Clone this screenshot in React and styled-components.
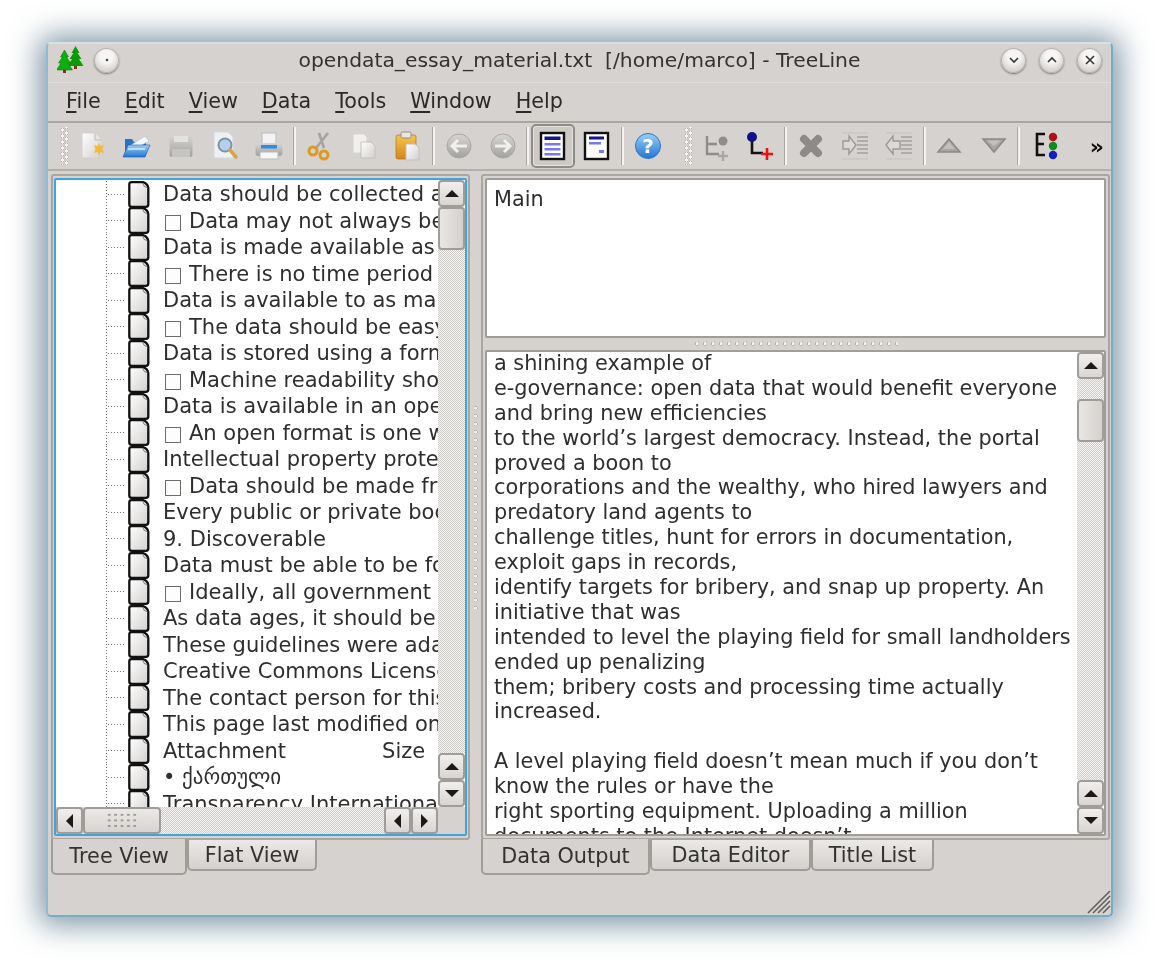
import React from 'react';
import styled, { createGlobalStyle } from 'styled-components';

const GlobalStyle = createGlobalStyle`
  html, body {
    margin: 0;
    padding: 0;
    background: #fff;
    height: 964px;
    overflow: hidden;
  }
  body {
    font-family: "DejaVu Sans", sans-serif;
    color: #2b2a29;
  }
`;

const Stage = styled.div`
  width: 1159px;
  height: 964px;
  padding: 42px 46px 47px 46px;
  box-sizing: border-box;
`;

const Win = styled.div`
  height: 100%;
  display: flex;
  flex-direction: column;
  box-sizing: border-box;
  background: #d6d2cf;
  border-radius: 5px;
  border: 2px solid #76abca;
  border-top-color: #d4e2ea;
  border-left-color: #8fbad2;
  box-shadow: 0 1px 30px 7px rgba(50, 85, 110, 0.62);
  filter: blur(0.45px);
`;

const TitleBar = styled.div`
  height: 39px;
  flex: none;
  box-sizing: border-box;
  display: grid;
  grid-template-columns: 1fr auto 1fr;
  align-items: center;
  padding: 0 9px 6px 9px;
  border-bottom: 1px solid #dfdcd9;
`;

const TitleSide = styled.div`
  display: flex;
  align-items: center;
  justify-content: ${({ $end }) => ($end ? 'flex-end' : 'flex-start')};
  gap: ${({ $end }) => ($end ? '13px' : '10px')};
`;

const TitleText = styled.div`
  font-size: 20.3px;
  white-space: pre;
  color: #33322f;
`;

const RoundBtn = styled.div`
  width: 25px;
  height: 25px;
  border-radius: 50%;
  display: flex;
  align-items: center;
  justify-content: center;
  background: radial-gradient(circle at 50% 35%, #f6f5f4 30%, #c9c6c3 85%);
  box-shadow: 0 1px 2px rgba(0, 0, 0, 0.45), inset 0 0 0 1px #b5b2af;
`;

const MenuBar = styled.div`
  height: 38px;
  flex: none;
  display: flex;
  align-items: center;
  padding: 0 0 2px 6px;
  box-sizing: border-box;
  margin-bottom: 2px;
  box-shadow: 0 2px 0 #aaa6a2;
  font-size: 20.7px;
`;

const MenuItem = styled.div`
  padding: 0 12px;
  & u {
    text-underline-offset: 3px;
    text-decoration-thickness: 2px;
  }
`;

const ToolBar = styled.div`
  height: 48px;
  flex: none;
  display: flex;
  align-items: center;
  padding-left: 12px;
  border-bottom: 2px solid #b3afab;
  box-sizing: border-box;
`;

const Handle = styled.div`
  width: 10px;
  height: 38px;
  flex: none;
  margin-left: ${({ $gap }) => $gap || 0}px;
  background:
    radial-gradient(circle, #f6f5f4 1.5px, #adaaa6 1.7px, transparent 2.2px) 0 0 / 5px 6px repeat-y,
    radial-gradient(circle, #f6f5f4 1.5px, #adaaa6 1.7px, transparent 2.2px) 4px 3px / 5px 6px repeat-y;
`;

const ToolBtn = styled.div`
  width: 44.3px;
  height: 44px;
  flex: none;
  display: flex;
  align-items: center;
  justify-content: center;
  box-sizing: border-box;
  border-radius: 5px;
  ${({ $active }) =>
    $active
      ? `border: 2px solid #8f8c88; background: #cdcac6; box-shadow: inset 0 0 0 1px #e4e1de;`
      : ''}
`;

const ToolSep = styled.div`
  width: 6px;
  height: 38px;
  flex: none;
  display: flex;
  justify-content: center;
  &::before {
    content: '';
    width: 1px;
    background: #a8a5a1;
    border-right: 2px solid #f4f3f2;
  }
`;

const More = styled.div`
  margin-left: auto;
  padding-right: 7px;
  font-size: 22px;
  font-weight: bold;
  color: #111;
`;

const Body = styled.div`
  flex: 1;
  min-height: 0;
  display: flex;
  padding: 3px 1px 0 3px;
`;

const Column = styled.div`
  width: ${({ $w }) => $w}px;
  flex: none;
  display: flex;
  flex-direction: column;
`;

const VSplit = styled.div`
  width: 11px;
  flex: none;
  display: flex;
  align-items: center;
  justify-content: center;
  height: 666px;
`;

const SplitDots = styled.div`
  width: ${({ $horizontal }) => ($horizontal ? '204px' : '4px')};
  height: ${({ $horizontal }) => ($horizontal ? '4px' : '204px')};
  background: radial-gradient(circle at 40% 40%, #f2f1ef 1.2px, #a5a29e 1.8px, transparent 2.2px) 0 0 /
    ${({ $horizontal }) => ($horizontal ? '8px 4px' : '4px 8px')};
`;

const Frame = styled.div`
  height: 666px;
  flex: none;
  box-sizing: border-box;
  border: 2px solid #a9a5a1;
  border-radius: 3px;
  padding: ${({ $tight }) => ($tight ? '2px 1px' : '2px')};
  display: flex;
  flex-direction: column;
`;

const TreeFocus = styled.div`
  flex: 1;
  min-height: 0;
  display: flex;
  flex-direction: column;
  border: 2px solid #45a3dc;
  border-radius: 2px;
  background: #fff;
`;

const TreeMain = styled.div`
  flex: 1;
  min-height: 0;
  display: flex;
`;

const TreeList = styled.div`
  flex: 1;
  min-width: 0;
  overflow: hidden;
  background: #fff;
  padding-top: 1px;
`;

const Row = styled.div`
  height: 26.5px;
  display: flex;
  align-items: center;
  padding-left: 50px;
  font-size: 21px;
  white-space: nowrap;
  color: #2f2e2d;
`;

const Branch = styled.div`
  width: 22px;
  height: 100%;
  flex: none;
  background:
    repeating-linear-gradient(to bottom, #77746f 0 1px, transparent 1px 3px) 0 0 / 1px 100% no-repeat,
    repeating-linear-gradient(to right, #77746f 0 1px, transparent 1px 3px) 2px 50% / 16px 1px no-repeat;
`;

const RowText = styled.span`
  margin-left: 13px;
`;

const Check = styled.span`
  display: inline-block;
  width: 14px;
  height: 14px;
  margin: 0 8px 0 2px;
  border: 1px solid #6f6c68;
  vertical-align: -3px;
  background: #fdfdfd;
`;

const SizeCol = styled.span`
  margin-left: 96px;
`;

const VBar = styled.div`
  width: 27px;
  flex: none;
  display: flex;
  flex-direction: column;
  background: #fff;
`;

const HBar = styled.div`
  height: 27px;
  flex: none;
  display: flex;
  background: #d6d2cf;
`;

const Track = styled.div`
  flex: 1;
  min-width: 0;
  min-height: 0;
  display: flex;
  flex-direction: ${({ $horizontal }) => ($horizontal ? 'row' : 'column')};
  padding-top: ${({ $before }) => $before || 0}px;
  background: repeating-conic-gradient(#d0cecb 0 25%, #f3f2f0 0 50%) 0 0 / 2px 2px;
`;

const ScrollBtn = styled.div`
  width: 27px;
  height: 27px;
  flex: none;
  box-sizing: border-box;
  display: flex;
  align-items: center;
  justify-content: center;
  border: 2px solid #a09d99;
  border-radius: 4px;
  background: linear-gradient(#f1efed, #d8d5d2);
`;

const Arrow = styled.div`
  width: 0;
  height: 0;
  border-style: solid;
  border-color: transparent;
  ${({ $dir }) =>
    ({
      up: 'border-width: 0 7px 7px 7px; border-bottom-color: #1b1a19;',
      down: 'border-width: 7px 7px 0 7px; border-top-color: #1b1a19;',
      left: 'border-width: 7px 7px 7px 0; border-right-color: #1b1a19;',
      right: 'border-width: 7px 0 7px 7px; border-left-color: #1b1a19;',
    })[$dir]}
`;

const VThumb = styled.div`
  height: 43px;
  flex: none;
  box-sizing: border-box;
  border: 2px solid #a09d99;
  border-radius: 4px;
  background: linear-gradient(to right, #e9e7e4, #d3d0cd);
`;

const HThumb = styled.div`
  width: 78px;
  flex: none;
  box-sizing: border-box;
  border: 2px solid #a09d99;
  border-radius: 4px;
  background: linear-gradient(#ebe9e7, #d6d3d0);
  display: flex;
  align-items: center;
  justify-content: center;
`;

const ThumbGrip = styled.div`
  width: 32px;
  height: 17px;
  background: radial-gradient(circle, #99968f 1px, transparent 1.4px) 0 0 / 6.4px 5.6px;
`;

const Corner = styled.div`
  width: 27px;
  flex: none;
  background: #d6d2cf;
`;

const TabRow = styled.div`
  flex: none;
  display: flex;
  align-items: flex-start;
`;

const Tab = styled.div`
  box-sizing: border-box;
  width: ${({ $w }) => $w}px;
  height: ${({ $selected }) => ($selected ? 36 : 31)}px;
  margin-top: ${({ $selected }) => ($selected ? -1 : 0)}px;
  display: flex;
  align-items: center;
  justify-content: center;
  font-size: 20.8px;
  color: #33322f;
  border: 2px solid #a09d99;
  border-top: none;
  border-radius: 0 0 5px 5px;
  background: ${({ $selected }) =>
    $selected ? '#d6d2cf' : 'linear-gradient(#ebe9e7, #d3d0cd)'};
`;

const OutputTop = styled.div`
  height: 160px;
  flex: none;
  box-sizing: border-box;
  background: #fff;
  border: 2px solid #a09d99;
  border-radius: 2px;
  padding: 7px 7px;
  font-size: 20.8px;
  color: #2f2e2d;
`;

const HSplit = styled.div`
  height: 12px;
  flex: none;
  display: flex;
  align-items: center;
  justify-content: center;
`;

const OutputBottom = styled.div`
  flex: 1;
  min-height: 0;
  display: flex;
  background: #fff;
  border: 2px solid #a09d99;
  border-radius: 2px;
`;

const OutputClip = styled.div`
  flex: 1;
  min-width: 0;
  overflow: hidden;
`;

const OutputText = styled.div`
  margin-top: -1px;
  padding: 0 7px;
  font-size: 20.8px;
  line-height: 24.89px;
  color: #2f2e2d;
  white-space: pre;
`;

const StatusBar = styled.div`
  flex: 1;
  min-height: 0;
  display: flex;
  justify-content: flex-end;
  align-items: flex-end;
`;

const treeRows = [
  ['Data should be collected at the source'],
  ['Data may not always be available', true],
  ['Data is made available as soon as'],
  ['There is no time period', true],
  ['Data is available to as many users'],
  ['The data should be easy to find', true],
  ['Data is stored using a format'],
  ['Machine readability should be', true],
  ['Data is available in an open format'],
  ['An open format is one where', true],
  ['Intellectual property protection'],
  ['Data should be made free of', true],
  ['Every public or private body'],
  ['9. Discoverable'],
  ['Data must be able to be found'],
  ['Ideally, all government data', true],
  ['As data ages, it should be kept'],
  ['These guidelines were adapted'],
  ['Creative Commons License'],
  ['The contact person for this'],
  ['This page last modified on'],
];

const outputText = `a shining example of
e-governance: open data that would benefit everyone
and bring new efficiencies
to the world’s largest democracy. Instead, the portal
proved a boon to
corporations and the wealthy, who hired lawyers and
predatory land agents to
challenge titles, hunt for errors in documentation,
exploit gaps in records,
identify targets for bribery, and snap up property. An
initiative that was
intended to level the playing field for small landholders
ended up penalizing
them; bribery costs and processing time actually
increased.

A level playing field doesn’t mean much if you don’t
know the rules or have the
right sporting equipment. Uploading a million
documents to the Internet doesn’t`;

const Defs = () => (
  <svg width="0" height="0" style={{ position: 'absolute' }}>
    <defs>
      <linearGradient id="pageFill" x1="0" y1="0" x2="1" y2="1">
        <stop offset="0" stopColor="#fff" />
        <stop offset="1" stopColor="#d2d0ce" />
      </linearGradient>
      <linearGradient id="greyFill" x1="0" y1="0" x2="0" y2="1">
        <stop offset="0" stopColor="#d8d6d3" />
        <stop offset="1" stopColor="#a3a19e" />
      </linearGradient>
      <linearGradient id="blueFill" x1="0" y1="0" x2="0" y2="1">
        <stop offset="0" stopColor="#9ad0f8" />
        <stop offset="1" stopColor="#2474d0" />
      </linearGradient>
      <linearGradient id="clipFill" x1="0" y1="0" x2="0" y2="1">
        <stop offset="0" stopColor="#f4c64c" />
        <stop offset="1" stopColor="#d4861a" />
      </linearGradient>
    </defs>
  </svg>
);

const Ico = ({ children }) => (
  <svg width="32" height="32" viewBox="0 0 32 32">
    {children}
  </svg>
);

const Trees = () => (
  <svg width="27" height="28" viewBox="0 0 27 28">
    <rect x="17" y="19" width="3" height="4" fill="#7a3c10" />
    <path d="M18.5 0 L22.5 7 L20.5 7 L24.5 13 L22 13 L26.5 20 L10.5 20 L15 13 L12.5 13 L16.5 7 L14.5 7 Z" fill="#0a9a0a" />
    <rect x="6" y="23" width="3" height="4" fill="#8a2c10" />
    <path d="M7.5 4 L11.5 11 L9.5 11 L13.5 17 L11 17 L15.5 24 L-0.5 24 L4 17 L1.5 17 L5.5 11 L3.5 11 Z" fill="#0cb00c" stroke="#086e08" strokeWidth="0.5" />
  </svg>
);

const NewIcon = () => (
  <Ico>
    <path d="M6 3 H19 L26 10 V28 H6 Z" fill="url(#pageFill)" stroke="#d2d0ce" />
    <path d="M19 3 V10 H26" fill="#e6e5e3" stroke="#bdbbb8" />
    <path d="M23 12 L24.5 16 L28 15 L26.5 19 L28 23 L24.5 22 L23 26 L21.5 22 L18 23 L19.5 19 L18 15 L21.5 16 Z" fill="#f0bb3e" />
  </Ico>
);

const OpenIcon = () => (
  <Ico>
    <path d="M5 9 H12 L14 12 H26 V26 H5 Z" fill="#2a72c4" />
    <path d="M11 15 L25 6 L29 11 L17 18 Z" fill="#f4f7fa" stroke="#aab8c4" strokeWidth="0.6" />
    <path d="M8 15 H30 L25 27 H3 Z" fill="url(#blueFill)" stroke="#1a5aa6" strokeWidth="0.6" />
    <path d="M8 19 H25" stroke="#d8eefc" strokeWidth="1.5" />
  </Ico>
);

const SaveIcon = () => (
  <Ico>
    <rect x="4.5" y="5" width="23" height="22" rx="2.5" fill="url(#greyFill)" />
    <rect x="9" y="6" width="14" height="6" fill="#e4e2e0" />
    <rect x="7" y="19" width="18" height="8" fill="#c6c4c1" />
  </Ico>
);

const PreviewIcon = () => (
  <Ico>
    <path d="M5 2 H19 L24 7 V28 H5 Z" fill="#eef0f4" stroke="#d4d7dc" />
    <circle cx="16" cy="15" r="6.5" fill="#b4d0ec" stroke="#7f93ab" strokeWidth="2" />
    <path d="M21 20 L27 27" stroke="#d9a349" strokeWidth="3.5" strokeLinecap="round" />
  </Ico>
);

const PrintIcon = () => (
  <Ico>
    <rect x="9" y="3" width="14" height="13" fill="#f3f3f3" stroke="#bbb" />
    <rect x="2.5" y="13" width="27" height="13" rx="3" fill="url(#greyFill)" />
    <rect x="8" y="15" width="16" height="3.5" fill="#2f8ce0" />
    <rect x="7" y="22" width="18" height="7" fill="#f7f7f7" stroke="#bbb" />
  </Ico>
);

const CutIcon = () => (
  <Ico>
    <path d="M24 3 L12 18 M15 3 L20 18" stroke="#a5a4a2" strokeWidth="2.6" />
    <circle cx="9" cy="21" r="4" fill="none" stroke="#dd9a1e" strokeWidth="3" />
    <circle cx="20" cy="25" r="4" fill="none" stroke="#dd9a1e" strokeWidth="3" />
  </Ico>
);

const CopyIcon = () => (
  <Ico>
    <path d="M5 4 H16 L19 7 V23 H5 Z" fill="#f1f0ef" stroke="#d6d4d1" />
    <path d="M13 12 H23 L27 16 V28 H13 Z" fill="url(#pageFill)" stroke="#c2c0bd" />
  </Ico>
);

const PasteIcon = () => (
  <Ico>
    <rect x="4" y="5" width="20" height="24" rx="2" fill="url(#clipFill)" stroke="#a86a10" strokeWidth="0.6" />
    <rect x="9" y="2" width="10" height="6" rx="1.5" fill="#e8e6e3" stroke="#8f8c88" />
    <path d="M14 14 H23 L27 18 V30 H14 Z" fill="url(#pageFill)" stroke="#c2c0bd" />
  </Ico>
);

const NavIcon = ({ dir }) => (
  <Ico>
    <circle cx="16" cy="16" r="12" fill="url(#greyFill)" stroke="#aaa7a4" />
    <path
      d={dir === 'left' ? 'M24 16 H10 M15 10 L9 16 L15 22' : 'M8 16 H22 M17 10 L23 16 L17 22'}
      fill="none"
      stroke="#f1f0ef"
      strokeWidth="3"
    />
  </Ico>
);

const TreeViewIcon = () => (
  <Ico>
    <rect x="4" y="3" width="23" height="26" fill="#fff" stroke="#111" strokeWidth="2.4" />
    <rect x="7.5" y="6.5" width="16" height="3.5" fill="#16168e" />
    <rect x="7.5" y="13" width="16" height="2.5" fill="#7878f2" />
    <rect x="7.5" y="18" width="16" height="2.5" fill="#7878f2" />
    <rect x="7.5" y="23" width="16" height="2.5" fill="#7878f2" />
  </Ico>
);

const PageViewIcon = () => (
  <Ico>
    <rect x="4" y="3" width="23" height="26" fill="#fff" stroke="#111" strokeWidth="2.4" />
    <rect x="8" y="6.5" width="15" height="3" fill="#16168e" />
    <rect x="8" y="12" width="12" height="2.5" fill="#7878f2" />
    <rect x="18" y="20" width="5" height="3" fill="#7878f2" />
  </Ico>
);

const HelpIcon = () => (
  <Ico>
    <circle cx="16" cy="16" r="12.5" fill="url(#blueFill)" stroke="#2a78d4" />
    <text x="16" y="23" textAnchor="middle" fontSize="20" fontWeight="bold" fontFamily="DejaVu Sans" fill="#fff">?</text>
  </Ico>
);

const ChildOffIcon = () => (
  <Ico>
    <path d="M7 6 V24 H19 M7 14 H17" fill="none" stroke="#8f8d8a" strokeWidth="2.4" />
    <circle cx="23" cy="11" r="4.5" fill="#8f8d8a" />
    <path d="M18 26 H28 M23 21 V31" stroke="#a9a7a4" strokeWidth="2.4" />
  </Ico>
);

const ChildOnIcon = () => (
  <Ico>
    <path d="M8 7 V23 H19" fill="none" stroke="#111" strokeWidth="2.6" />
    <circle cx="8" cy="7" r="5" fill="#10108a" />
    <path d="M17 24 H29 M23 18 V30" stroke="#ee1111" strokeWidth="2.6" />
  </Ico>
);

const DeleteIcon = () => (
  <Ico>
    <path d="M9 9 L23 23 M23 9 L9 23" stroke="#8d8b88" strokeWidth="8" strokeLinecap="round" />
  </Ico>
);

const IndentIcon = ({ left }) => (
  <Ico>
    <path d="M3 3 H29 M3 29 H29" stroke="#c3c0bc" strokeWidth="1" />
    <path d="M18 7 H29 M18 11 H29 M18 15 H29 M18 19 H29 M18 23 H29" stroke="#a3a19d" strokeWidth="1.6" />
    <path
      d={left ? 'M17 11 H10 V6 L3 15 L10 24 V19 H17 Z' : 'M4 11 H10 V6 L17 15 L10 24 V19 H4 Z'}
      fill="#dcdad7"
      stroke="#9b9995"
      strokeWidth="1.4"
    />
  </Ico>
);

const MoveIcon = ({ up }) => (
  <Ico>
    <path d={up ? 'M16 9 L27 22 H5 Z' : 'M5 9 H27 L16 22 Z'} fill="#a9a7a4" stroke="#8a8885" strokeWidth="1.5" />
    <path d={up ? 'M16 12 L22 19 H10 Z' : 'M9 10.5 H23 L16 16 Z'} fill="#c2c0bd" />
  </Ico>
);

const ConfigIcon = () => (
  <Ico>
    <path d="M17 4 H9 V25 H17 M9 14 H16" fill="none" stroke="#111" strokeWidth="2.6" />
    <circle cx="25" cy="7" r="4.2" fill="#b01018" />
    <circle cx="25" cy="16" r="4.2" fill="#108a20" />
    <circle cx="25" cy="25" r="4.2" fill="#1020b8" />
  </Ico>
);

const SizeGrip = () => (
  <svg width="24" height="24" viewBox="0 0 24 24">
    <path d="M1 22 L23 0 M6 22 L23 5 M11 22 L23 10 M16 22 L23 15" stroke="#5f5d5a" strokeWidth="1.5" />
  </svg>
);

function PageGlyph() {
  return (
    <svg width="22" height="27" viewBox="0 0 22 27" style={{ flex: 'none' }}>
      <path
        d="M3.5 1.2 H15 Q19.5 2.5 20.3 7 V23.5 Q20.3 25.8 18 25.8 H3.5 Q1.3 25.8 1.3 23.5 V3.5 Q1.3 1.2 3.5 1.2 Z"
        fill="url(#pageFill)"
        stroke="#111"
        strokeWidth="2.3"
      />
      <path d="M14.5 2 Q15 6 19.5 7" fill="#cfcdcb" stroke="#777" strokeWidth="0.8" />
    </svg>
  );
}

const VScroll = ({ before }) => (
  <VBar>
    <ScrollBtn><Arrow $dir="up" /></ScrollBtn>
    <Track $before={before}>
      <VThumb />
    </Track>
    <ScrollBtn><Arrow $dir="up" /></ScrollBtn>
    <ScrollBtn><Arrow $dir="down" /></ScrollBtn>
  </VBar>
);

function App() {
  return (
    <Stage>
      <GlobalStyle />
      <Defs />
      <Win>
        <TitleBar>
          <TitleSide>
            <Trees />
            <RoundBtn>
              <svg width="4" height="4"><circle cx="2" cy="2" r="1.3" fill="#444" /></svg>
            </RoundBtn>
          </TitleSide>
          <TitleText>opendata_essay_material.txt  [/home/marco] - TreeLine</TitleText>
          <TitleSide $end>
            <RoundBtn>
              <svg width="12" height="12" viewBox="0 0 12 12"><path d="M2 4 L6 8 L10 4" fill="none" stroke="#333" strokeWidth="1.6" /></svg>
            </RoundBtn>
            <RoundBtn>
              <svg width="12" height="12" viewBox="0 0 12 12"><path d="M2 8 L6 4 L10 8" fill="none" stroke="#333" strokeWidth="1.6" /></svg>
            </RoundBtn>
            <RoundBtn>
              <svg width="12" height="12" viewBox="0 0 12 12"><path d="M2 2 L10 10 M10 2 L2 10" fill="none" stroke="#333" strokeWidth="1.6" /></svg>
            </RoundBtn>
          </TitleSide>
        </TitleBar>

        <MenuBar>
          <MenuItem><u>F</u>ile</MenuItem>
          <MenuItem><u>E</u>dit</MenuItem>
          <MenuItem><u>V</u>iew</MenuItem>
          <MenuItem><u>D</u>ata</MenuItem>
          <MenuItem><u>T</u>ools</MenuItem>
          <MenuItem><u>W</u>indow</MenuItem>
          <MenuItem><u>H</u>elp</MenuItem>
        </MenuBar>

        <ToolBar>
          <Handle />
          <ToolBtn><NewIcon /></ToolBtn>
          <ToolBtn><OpenIcon /></ToolBtn>
          <ToolBtn><SaveIcon /></ToolBtn>
          <ToolBtn><PreviewIcon /></ToolBtn>
          <ToolBtn><PrintIcon /></ToolBtn>
          <ToolSep />
          <ToolBtn><CutIcon /></ToolBtn>
          <ToolBtn><CopyIcon /></ToolBtn>
          <ToolBtn><PasteIcon /></ToolBtn>
          <ToolSep />
          <ToolBtn><NavIcon dir="left" /></ToolBtn>
          <ToolBtn><NavIcon dir="right" /></ToolBtn>
          <ToolSep />
          <ToolBtn $active><TreeViewIcon /></ToolBtn>
          <ToolBtn><PageViewIcon /></ToolBtn>
          <ToolSep />
          <ToolBtn><HelpIcon /></ToolBtn>
          <Handle $gap={14} />
          <ToolBtn><ChildOffIcon /></ToolBtn>
          <ToolBtn><ChildOnIcon /></ToolBtn>
          <ToolSep />
          <ToolBtn><DeleteIcon /></ToolBtn>
          <ToolBtn><IndentIcon /></ToolBtn>
          <ToolBtn><IndentIcon left /></ToolBtn>
          <ToolSep />
          <ToolBtn><MoveIcon up /></ToolBtn>
          <ToolBtn><MoveIcon /></ToolBtn>
          <ToolSep />
          <ToolBtn><ConfigIcon /></ToolBtn>
          <More>»</More>
        </ToolBar>

        <Body>
          <Column $w={419}>
            <Frame $tight>
              <TreeFocus>
                <TreeMain>
                  <TreeList>
                    {treeRows.map(([text, check]) => (
                      <Row key={text}>
                        <Branch />
                        <PageGlyph />
                        <RowText>
                          {check && <Check />}
                          {text}
                        </RowText>
                      </Row>
                    ))}
                    <Row>
                      <Branch />
                      <PageGlyph />
                      <RowText>Attachment<SizeCol>Size</SizeCol></RowText>
                    </Row>
                    <Row>
                      <Branch />
                      <PageGlyph />
                      <RowText>• ქართული</RowText>
                    </Row>
                    <Row>
                      <Branch />
                      <PageGlyph />
                      <RowText>Transparency International</RowText>
                    </Row>
                  </TreeList>
                  <VScroll before={0} />
                </TreeMain>
                <HBar>
                  <ScrollBtn><Arrow $dir="left" /></ScrollBtn>
                  <Track $horizontal>
                    <HThumb><ThumbGrip /></HThumb>
                  </Track>
                  <ScrollBtn><Arrow $dir="left" /></ScrollBtn>
                  <ScrollBtn><Arrow $dir="right" /></ScrollBtn>
                  <Corner />
                </HBar>
              </TreeFocus>
            </Frame>
            <TabRow>
              <Tab $selected $w={136}>Tree View</Tab>
              <Tab $w={130}>Flat View</Tab>
            </TabRow>
          </Column>

          <VSplit><SplitDots /></VSplit>

          <Column $w={629}>
            <Frame>
              <OutputTop>Main</OutputTop>
              <HSplit><SplitDots $horizontal /></HSplit>
              <OutputBottom>
                <OutputClip>
                  <OutputText>{outputText}</OutputText>
                </OutputClip>
                <VScroll before={20} />
              </OutputBottom>
            </Frame>
            <TabRow>
              <Tab $selected $w={169}>Data Output</Tab>
              <Tab $w={161}>Data Editor</Tab>
              <Tab $w={123}>Title List</Tab>
            </TabRow>
          </Column>
        </Body>

        <StatusBar><SizeGrip /></StatusBar>
      </Win>
    </Stage>
  );
}

export default App;
